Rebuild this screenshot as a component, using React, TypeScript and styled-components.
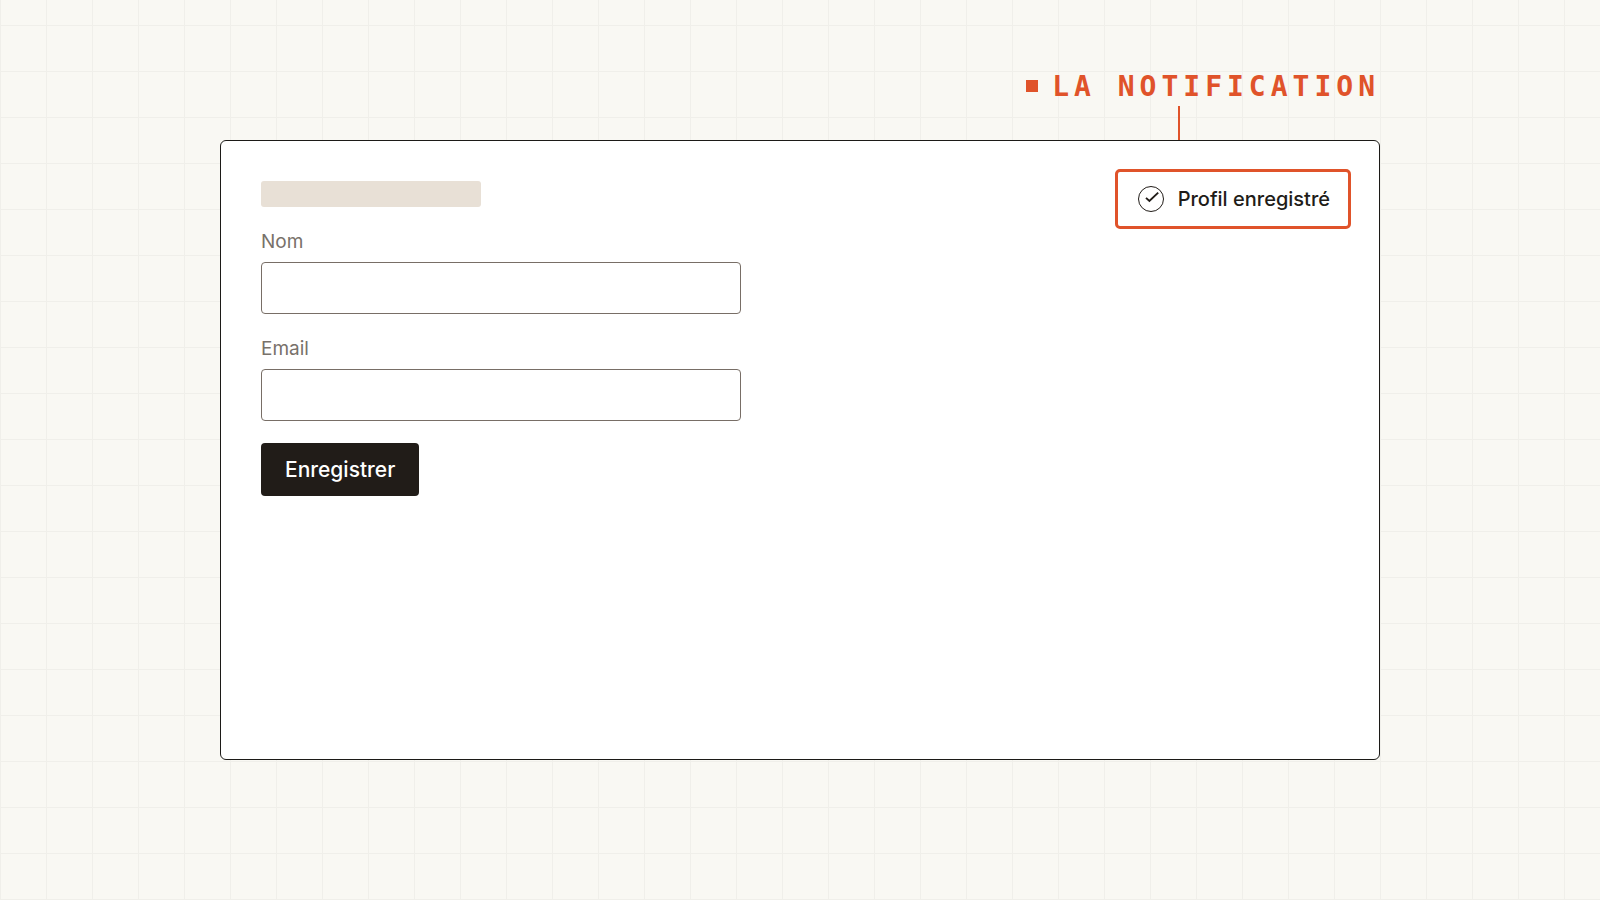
import React from "react";
import styled, { createGlobalStyle } from "styled-components";

const color = {
  paper: "#f9f8f3",
  grid: "#f0efea",
  ink: "#211c18",
  frame: "#1c1a17",
  accent: "#e0532a",
  muted: "#78716a",
  field: "#786e66",
  skeleton: "#e8e0d6",
};

const GlobalStyle = createGlobalStyle`
  *, *::before, *::after { box-sizing: border-box; }
  body {
    margin: 0;
    font-family: Inter, "Liberation Sans", sans-serif;
    color: ${color.ink};
    background-color: ${color.paper};
  }
`;

const Page = styled.main`
  min-height: 100vh;
  display: grid;
  grid-template-columns: minmax(0, 1160px);
  grid-template-rows: 1fr auto 1fr;
  justify-content: center;
  padding: 0 24px;
  background-color: ${color.paper};
  background-image:
    linear-gradient(to top, ${color.grid} 1px, transparent 1px),
    linear-gradient(to right, ${color.grid} 1px, transparent 1px);
  background-size: 46px 46px;
  background-position: left bottom;
`;

const Callout = styled.header`
  display: flex;
  flex-direction: column;
  align-items: flex-end;
  justify-content: flex-end;
`;

const CalloutTitle = styled.h1`
  display: flex;
  align-items: flex-end;
  gap: 14px;
  margin: 0;
  font-family: "DejaVu Sans Mono", "Liberation Mono", monospace;
  font-size: 28px;
  font-weight: 700;
  line-height: 38px;
  letter-spacing: 5px;
  white-space: nowrap;
  color: ${color.accent};
`;

const Marker = styled.span`
  width: 12px;
  height: 12px;
  margin-bottom: 14px;
  background: ${color.accent};
`;

const Connector = styled.span`
  width: 2px;
  height: 34px;
  margin-right: 200px;
  background: ${color.accent};
`;

const Card = styled.section`
  position: relative;
  min-height: 620px;
  padding: 40px;
  background: #fff;
  border: 1px solid ${color.frame};
  border-radius: 6px;
`;

const ProfileForm = styled.form`
  display: flex;
  flex-direction: column;
  align-items: flex-start;
  gap: 22px;
`;

const TitleSkeleton = styled.div`
  width: 220px;
  height: 26px;
  border-radius: 3px;
  background: ${color.skeleton};
`;

const Field = styled.div`
  display: flex;
  flex-direction: column;
  gap: 8px;
  width: 100%;
  max-width: 480px;
`;

const Label = styled.label`
  font-size: 19px;
  line-height: 25px;
  color: ${color.muted};
`;

const TextInput = styled.input`
  width: 100%;
  height: 52px;
  padding: 0 16px;
  font: inherit;
  font-size: 19px;
  color: ${color.ink};
  background: #fff;
  border: 1px solid ${color.field};
  border-radius: 4px;
`;

const SubmitButton = styled.button`
  padding: 13px 24px 12px;
  font: inherit;
  font-size: 21px;
  font-weight: 500;
  line-height: 28px;
  color: #fff;
  background: ${color.ink};
  border: 0;
  border-radius: 4px;
`;

const Toast = styled.div`
  position: absolute;
  top: 28px;
  right: 28px;
  display: flex;
  align-items: center;
  gap: 14px;
  padding: 13px 18px 13px 20px;
  font-size: 20px;
  font-weight: 500;
  line-height: 28px;
  white-space: nowrap;
  background: #fff;
  border: 3px solid ${color.accent};
  border-radius: 5px;
`;

const CheckCircle = () => (
  <svg width="26" height="26" viewBox="0 0 26 26" fill="none" stroke={color.ink} aria-hidden="true">
    <circle cx="13" cy="13" r="12.5" strokeWidth="1" />
    <path d="M8 11.9 L11.4 15 L20.2 6.6" strokeWidth="1.9" />
  </svg>
);

export default function App() {
  return (
    <>
      <GlobalStyle />
      <Page>
        <Callout>
          <CalloutTitle>
            <Marker />
            LA NOTIFICATION
          </CalloutTitle>
          <Connector />
        </Callout>
        <Card>
          <ProfileForm onSubmit={(event) => event.preventDefault()}>
            <TitleSkeleton />
            <Field>
              <Label htmlFor="nom">Nom</Label>
              <TextInput id="nom" type="text" />
            </Field>
            <Field>
              <Label htmlFor="email">Email</Label>
              <TextInput id="email" type="email" />
            </Field>
            <SubmitButton type="submit">Enregistrer</SubmitButton>
          </ProfileForm>
          <Toast role="status">
            <CheckCircle />
            Profil enregistré
          </Toast>
        </Card>
      </Page>
    </>
  );
}
